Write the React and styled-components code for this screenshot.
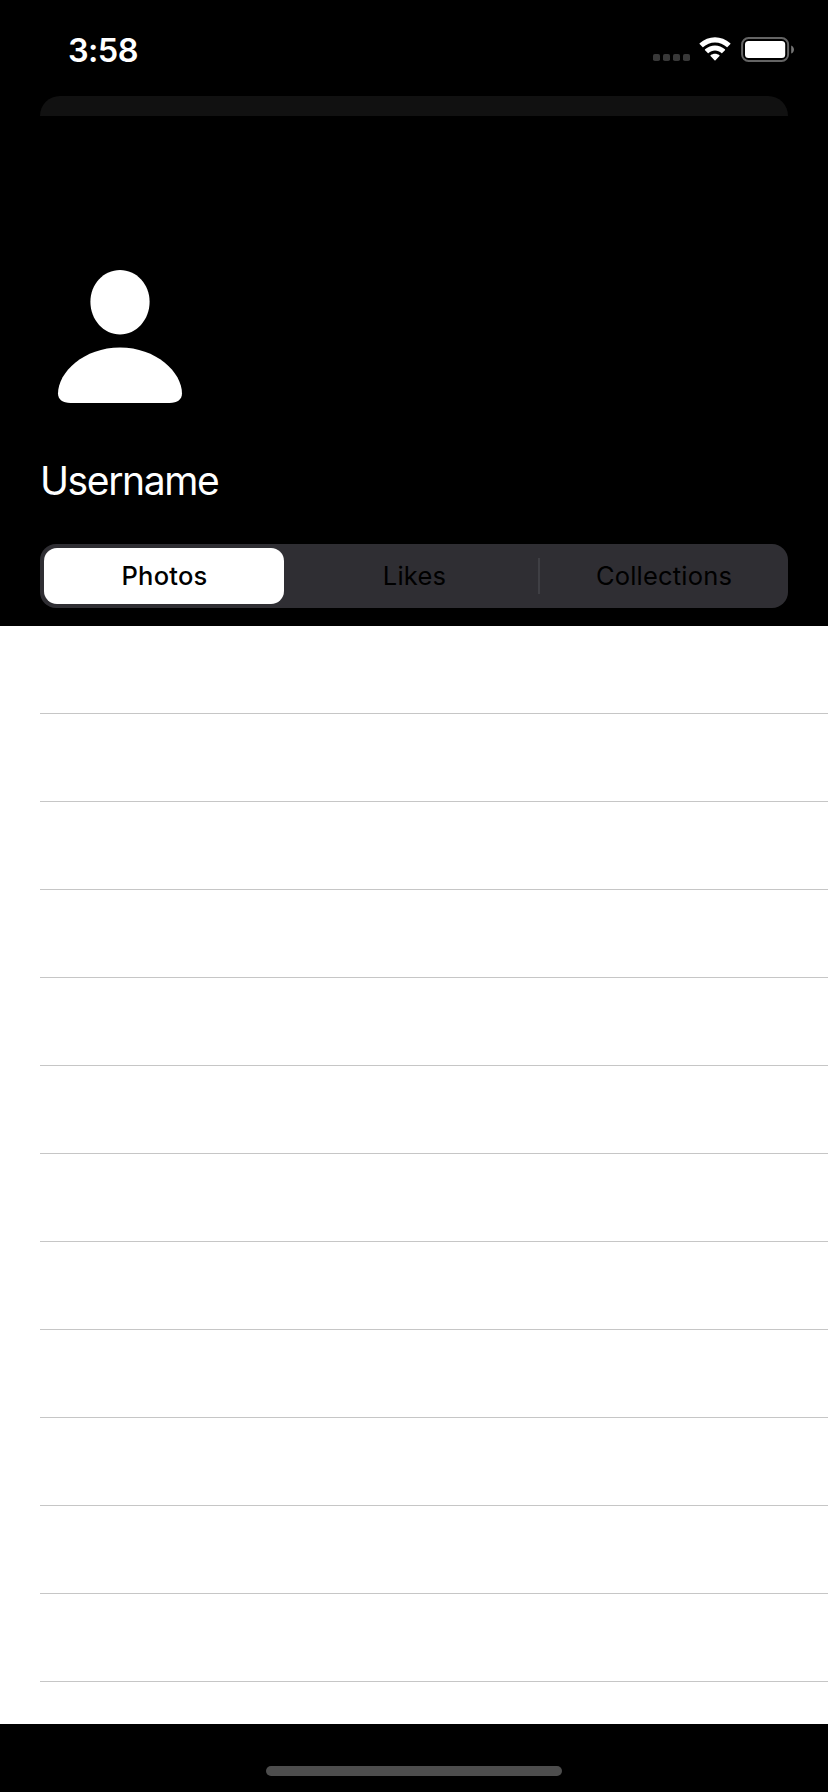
import React from "react";
import styled, { createGlobalStyle } from "styled-components";

const GlobalStyle = createGlobalStyle`
  * { box-sizing: border-box; }
  body { margin: 0; background: #000; font-family: Inter, "Liberation Sans", sans-serif; }
`;

const Screen = styled.main`
  width: 828px;
  height: 1792px;
  overflow: hidden;
  display: flex;
  flex-direction: column;
  background: #000;
`;

const StatusBar = styled.header`
  height: 96px;
  flex: none;
  display: flex;
  justify-content: space-between;
  align-items: flex-start;
  padding: 30px 33px 0 68px;
  color: #fff;
`;

const Time = styled.time`
  font-size: 32.5px;
  font-weight: 600;
  line-height: 41px;
  letter-spacing: -0.6px;
`;

const StatusIcons = styled.svg`
  display: block;
  width: 142px;
  height: 25px;
  margin-top: 7px;
`;

const SheetEdge = styled.div`
  height: 20px;
  flex: none;
  margin: 0 40px;
  background: #111;
  border-radius: 20px 20px 0 0;
`;

const Profile = styled.section`
  height: 510px;
  flex: none;
  padding: 144px 40px 0;
`;

const Avatar = styled.svg`
  display: block;
  width: 160px;
  height: 160px;
`;

const Username = styled.h1`
  margin: 37px 0 0;
  height: 48px;
  color: #fff;
  font-size: 39px;
  font-weight: 400;
  line-height: 48px;
  letter-spacing: -1.4px;
`;

const Segments = styled.nav`
  display: flex;
  align-items: center;
  height: 64px;
  margin-top: 39px;
  padding: 4px;
  border-radius: 16px;
  background: #2f2e33;
`;

const Segment = styled.button`
  width: ${({ $width }) => $width}px;
  height: 56px;
  flex: none;
  padding: 0 0 0 ${({ $inset }) => $inset}px;
  border: 0;
  border-radius: 13px;
  background: ${({ $selected }) => ($selected ? "#fff" : "transparent")};
  color: #000;
  font-family: inherit;
  font-size: 25.5px;
  font-weight: ${({ $selected }) => ($selected ? 500 : 400)};
  line-height: 56px;
  letter-spacing: 0.2px;
`;

const Divider = styled.span`
  width: 2px;
  height: 36px;
  flex: none;
  background: #3f3f44;
`;

const List = styled.ul`
  height: 1098px;
  flex: none;
  margin: 0;
  padding: 0 0 0 40px;
  list-style: none;
  background: #fff;
`;

const Row = styled.li`
  height: 88px;
  border-bottom: 1px solid #c6c6c6;
`;

const Footer = styled.footer`
  height: 68px;
  display: flex;
  justify-content: center;
  align-items: flex-end;
  padding-bottom: 16px;
`;

const HomeIndicator = styled.div`
  width: 296px;
  height: 10px;
  border-radius: 5px;
  background: #4d4d4d;
`;

export default function App() {
  return (
    <Screen>
      <GlobalStyle />
      <StatusBar>
        <Time>3:58</Time>
        <StatusIcons viewBox="0 0 142 25" aria-hidden="true">
          {[0, 10, 20, 30].map((x) => (
            <rect key={x} x={x} y="17" width="7" height="7" rx="1.8" fill="#383838" />
          ))}
          <g transform="translate(46.4 0.3)" fill="#fff">
            <path d="M15.6 5.1C20.1 5.1 24.2 6.8 27.3 9.7Q27.7 10.1 28.1 9.7L31 6.8Q31.3 6.4 30.9 6C22.3 -2 8.9 -2 0.3 6Q-.1 6.4 .2 6.8L3.1 9.7Q3.5 10.1 3.9 9.7C7 6.8 11.1 5.1 15.6 5.1Z" />
            <path d="M15.6 13.3C18.1 13.3 20.3 14.2 22 15.7Q22.4 16.1 22.8 15.7L25.6 12.9Q26 12.4 25.5 12C20 6.9 11.2 6.9 5.7 12Q5.2 12.4 5.6 12.9L8.4 15.7Q8.8 16.1 9.2 15.7C10.9 14.2 13.1 13.3 15.6 13.3Z" />
            <path d="M20.1 18.8Q20.6 18.4 20 17.9C17.5 15.9 13.7 15.9 11.2 17.9Q10.6 18.4 11.1 18.8L15.1 22.9Q15.6 23.4 16.1 22.9Z" />
          </g>
          <rect x="89.1" y="1.1" width="46" height="22.8" rx="6.5" fill="none" stroke="#646464" strokeWidth="2" />
          <rect x="92" y="4" width="40.2" height="17" rx="3.5" fill="#fff" />
          <path d="M138.2 8.4C141.9 10 141.9 15 138.2 16.6Z" fill="#757575" />
        </StatusIcons>
      </StatusBar>
      <SheetEdge />
      <Profile>
        <Avatar viewBox="0 0 160 160" fill="#fff" aria-hidden="true">
          <path d="M80 10C96.3 10 109.6 24 109.6 41.8C109.6 60 96.3 74.5 80 74.5C63.7 74.5 50.4 60 50.4 41.8C50.4 24 63.7 10 80 10Z" />
          <path d="M80 87.4C116 87.4 142 112 142 133.6C142 139.5 137.5 143 129.5 143H30.5C22.5 143 18 139.5 18 133.6C18 112 44 87.4 80 87.4Z" />
        </Avatar>
        <Username>Username</Username>
        <Segments>
          <Segment $width={240} $inset={1} $selected>Photos</Segment>
          <Segment $width={254} $inset={7}>Likes</Segment>
          <Divider />
          <Segment $width={244} $inset={4}>Collections</Segment>
        </Segments>
      </Profile>
      <List>
        {Array.from({ length: 12 }, (_, i) => (
          <Row key={i} />
        ))}
      </List>
      <Footer>
        <HomeIndicator />
      </Footer>
    </Screen>
  );
}
